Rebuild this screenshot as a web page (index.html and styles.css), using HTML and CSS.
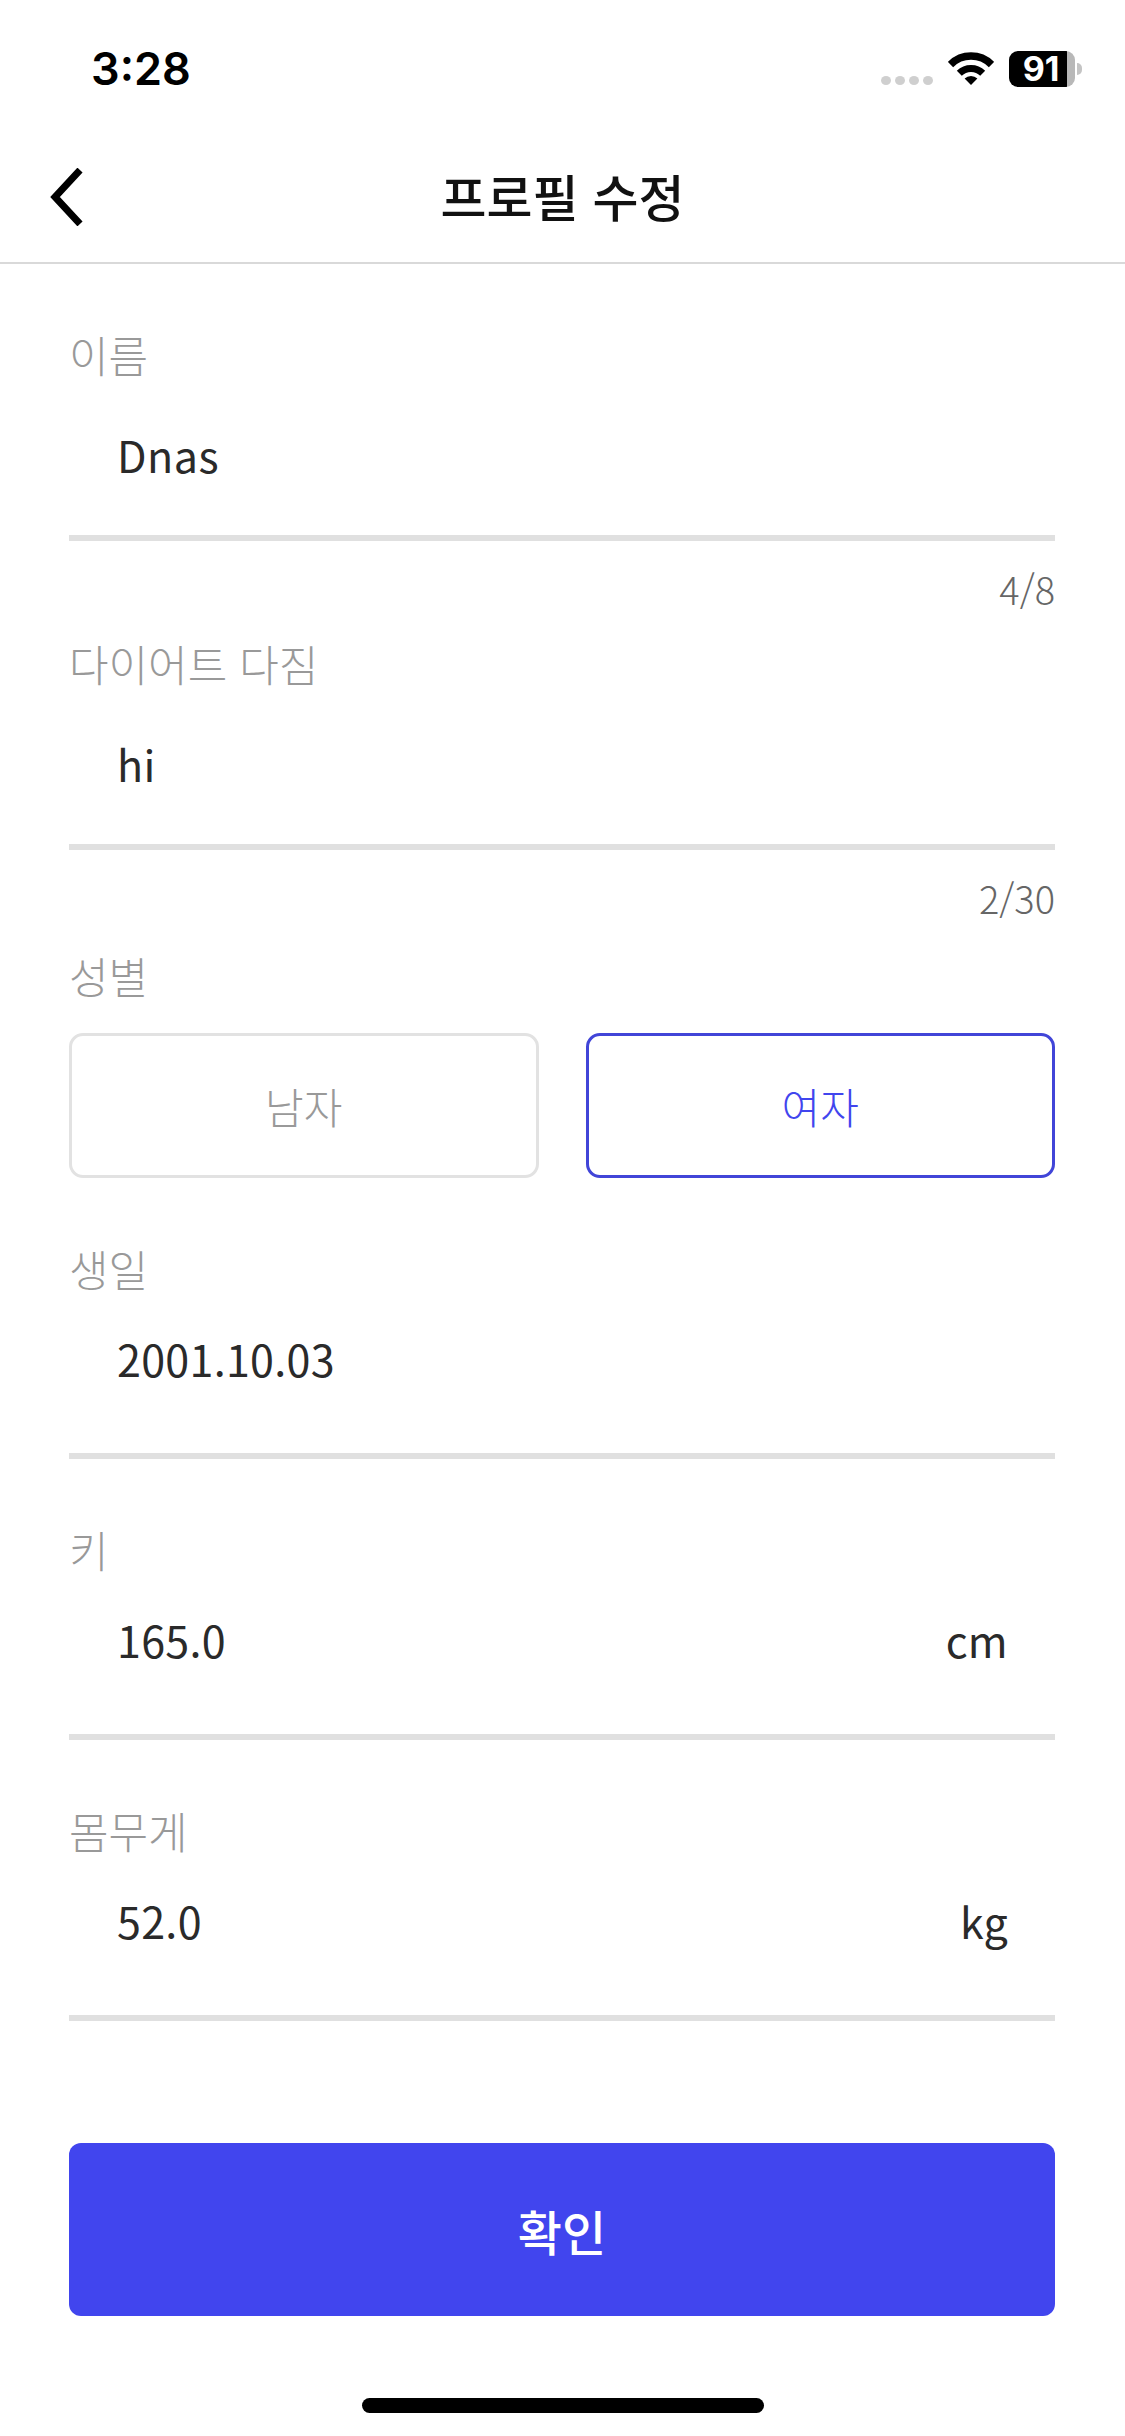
FILE: index.html
```html
<!DOCTYPE html>
<html lang="ko">

<head>
    <meta charset="UTF-8">
    <meta name="viewport" content="width=device-width, initial-scale=1.0">
    <title>프로필 수정</title>
    <link rel="stylesheet" href="styles.css">
</head>

<body>
    <div class="page">
        <div class="status-bar">
            <span class="time">3:28</span>
            <div class="status-icons">
                <div class="signal">
                    <span></span><span></span><span></span><span></span>
                </div>
                <svg class="wifi" width="46" height="33" viewBox="0 0 46 33">
                    <path d="M2.5 12.5A29 29 0 0 1 43.5 12.5" fill="none" stroke="#000" stroke-width="7.5" />
                    <path d="M11.3 21.3A16.5 16.5 0 0 1 34.7 21.3" fill="none" stroke="#000" stroke-width="7" />
                    <path d="M23 33L16.6 26.6A9 9 0 0 1 29.4 26.6Z" fill="#000" />
                </svg>
                <div class="battery"><span>91</span></div>
                <div class="battery-nub"></div>
            </div>
        </div>

        <div class="nav">
            <svg class="back" width="34" height="58" viewBox="0 0 34 58">
                <path d="M30 2L5 29L30 56" fill="none" stroke="#000" stroke-width="7" />
            </svg>
            <h1>프로필 수정</h1>
        </div>

        <div class="form">
            <div class="field with-counter">
                <div class="label">이름</div>
                <div class="value">Dnas</div>
                <div class="counter">4/8</div>
            </div>
            <div class="field with-counter">
                <div class="label">다이어트 다짐</div>
                <div class="value">hi</div>
                <div class="counter">2/30</div>
            </div>
            <div class="field gender-field">
                <div class="label">성별</div>
                <div class="gender">
                    <div class="gender-option">남자</div>
                    <div class="gender-option selected">여자</div>
                </div>
            </div>
            <div class="field">
                <div class="label">생일</div>
                <div class="value">2001.10.03</div>
            </div>
            <div class="field">
                <div class="label">키</div>
                <div class="value">165.0<span class="unit">cm</span></div>
            </div>
            <div class="field">
                <div class="label">몸무게</div>
                <div class="value">52.0<span class="unit">kg</span></div>
            </div>
            <div class="submit">확인</div>
        </div>

        <div class="home-bar"></div>
    </div>
</body>

</html>
```

FILE: styles.css
```css
body {
    margin: 0;
    background: #fff;
    font-family: "Noto Sans CJK KR", "Noto Sans", sans-serif;
    color: #2a2a2a;
}

.page {
    width: 1125px;
    height: 2436px;
    display: flex;
    flex-direction: column;
    overflow: hidden;
}

.status-bar {
    height: 132px;
    display: flex;
    justify-content: space-between;
    align-items: flex-start;
    padding: 0 43px 0 91px;
    box-sizing: border-box;
}

.time {
    font-family: Inter, sans-serif;
    font-weight: 600;
    font-size: 45px;
    line-height: 56px;
    margin-top: 41px;
    color: #000;
}

.status-icons {
    display: flex;
    align-items: flex-end;
    margin-top: 51px;
    height: 36px;
}

.signal {
    display: flex;
    gap: 4px;
    margin-right: 15px;
    margin-bottom: 2px;
}

.signal span {
    width: 10px;
    height: 9px;
    border-radius: 50%;
    background: #cfcfcf;
}

.wifi {
    margin-right: 15px;
    margin-bottom: 2px;
}

.battery {
    width: 66px;
    height: 36px;
    border-radius: 9px;
    background: linear-gradient(90deg, #000 88%, #b8b8b8 88%);
    display: flex;
    justify-content: center;
    padding-right: 2px;
    box-sizing: border-box;
}

.battery span {
    font-family: Inter, sans-serif;
    font-weight: 700;
    font-size: 34px;
    line-height: 36px;
    color: #fff;
}

.battery-nub {
    width: 5px;
    height: 12px;
    margin: 0 0 12px 2px;
    border-radius: 0 6px 6px 0;
    background: #c4c4c4;
}

.nav {
    height: 132px;
    border-bottom: 2px solid #d9d9d9;
    box-sizing: border-box;
    display: flex;
    align-items: center;
    justify-content: center;
    position: relative;
}

.back {
    position: absolute;
    left: 50px;
    top: 36px;
}

h1 {
    margin: 0 0 4px;
    font-size: 50px;
    font-weight: 500;
    line-height: 70px;
    color: #111;
}

.form {
    padding: 63px 70px 0 69px;
}

.label {
    font-size: 43px;
    font-weight: 300;
    line-height: 60px;
    margin: -2px 0 2px;
    color: #999;
}

.field {
    display: flow-root;
    height: 281px;
    box-sizing: border-box;
}

.field .value {
    height: 149px;
    margin-top: 12px;
    padding: 18px 47px 0 48px;
    border-bottom: 6px solid #e0e0e0;
    box-sizing: border-box;
    font-size: 43px;
    line-height: 60px;
    letter-spacing: 0.3px;
    display: flex;
    justify-content: space-between;
}

.with-counter {
    height: 309px;
}

.with-counter .label {
    margin: -3px 0 3px;
}

.field.with-counter .value {
    height: 154px;
    margin-top: 0;
    padding-top: 37px;
    letter-spacing: 0.5px;
}

.counter {
    font-size: 38px;
    font-weight: 300;
    line-height: 50px;
    margin-top: 23px;
    text-align: right;
    color: #666;
}

.unit {
    display: block;
}

.gender-field {
    height: 295px;
}

.gender-field .label {
    margin: 0;
}

.gender {
    display: grid;
    grid-template-columns: 1fr 1fr;
    gap: 47px;
    margin-top: 28px;
}

.gender-option {
    height: 145px;
    border: 3px solid #e2e2e2;
    border-radius: 14px;
    box-sizing: border-box;
    display: flex;
    align-items: center;
    justify-content: center;
    font-size: 42px;
    font-weight: 300;
    color: #999;
}

.gender-option.selected {
    border-color: #4145d8;
    color: #4145ee;
}

.submit {
    height: 173px;
    margin-top: 60px;
    border-radius: 12px;
    background: #4145ee;
    display: flex;
    align-items: center;
    justify-content: center;
    font-size: 48px;
    font-weight: 500;
    color: #fff;
}

.home-bar {
    width: 402px;
    height: 15px;
    margin: 82px auto 0;
    border-radius: 8px;
    background: #000;
}
```
